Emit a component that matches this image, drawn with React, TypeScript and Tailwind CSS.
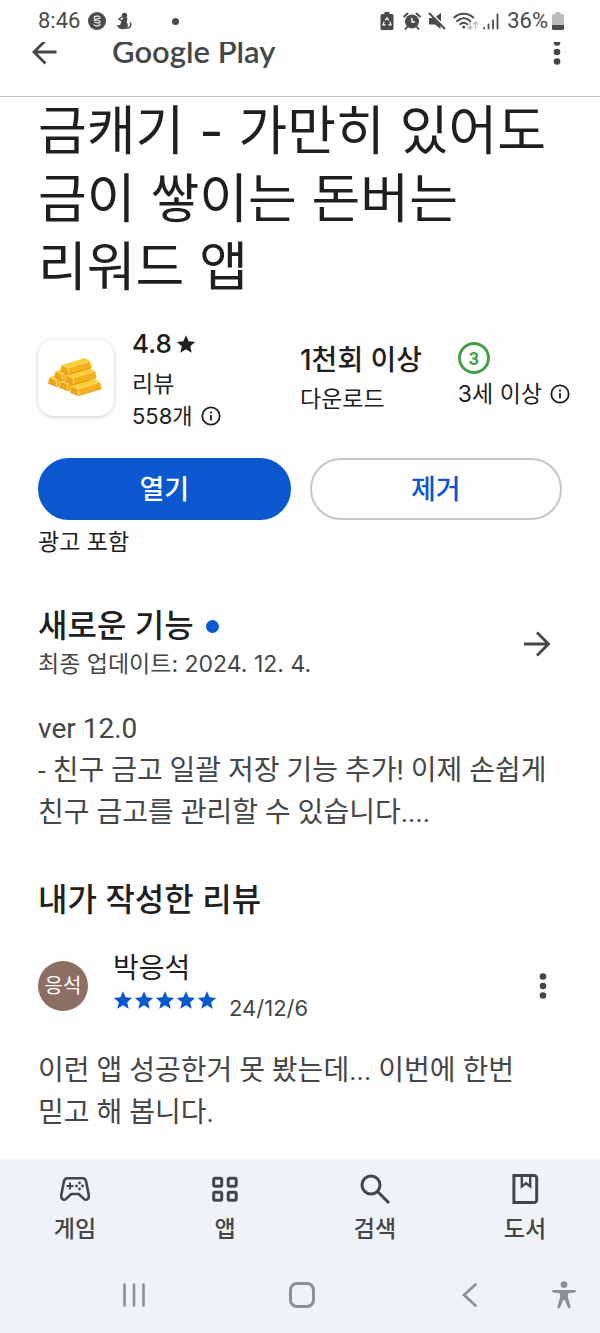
import type { ReactNode } from "react";

const STAR = "M12 1.5l3.1 7.3 7.9.7-6 5.2 1.8 7.8L12 18.4l-6.8 4.1L7 14.7 1 9.5l7.9-.7z";

function Star({ className }: { className: string }) {
  return (
    <svg viewBox="0 0 24 24" className={className} fill="currentColor" aria-hidden="true">
      <path d={STAR} />
    </svg>
  );
}

function InfoIcon() {
  return (
    <svg viewBox="0 0 20 20" className="size-5 shrink-0" fill="none" stroke="currentColor" strokeWidth="1.8" aria-hidden="true">
      <circle cx="10" cy="10" r="8.7" />
      <path d="M10 9v5.4M10 5.4v2" />
    </svg>
  );
}

function MoreIcon() {
  return (
    <svg viewBox="0 0 8 28" className="h-7 w-2" fill="currentColor" aria-hidden="true">
      <circle cx="4" cy="4.500" r="3.300" />
      <circle cx="4" cy="14" r="3.300" />
      <circle cx="4" cy="23.500" r="3.300" />
    </svg>
  );
}

function StatusBar() {
  return (
    <div className="flex h-[42px] items-center justify-between pr-9 pl-[38px] text-[#4a4a4a]">
      <div className="flex items-center">
        <span className="font-[Roboto] text-[22px] leading-6">8:46</span>
        <svg viewBox="0 0 18 18" className="ml-2 size-[18px]" aria-hidden="true">
          <circle cx="9" cy="9" r="9" fill="currentColor" />
          <path d="M12 5.200C11 3.600 6.200 3.600 6.200 6.200c0 2.300 5.800 1.300 5.800 3.600 0 1.300-3.500 1.500-5.200.5M6 12.800c1 1.600 6 1.600 6-.8M9 6.500h3M6.200 8.500h2" fill="none" stroke="#f2f2f2" strokeWidth="1.200" strokeLinecap="round" />
        </svg>
        <svg viewBox="0 0 16 18" className="ml-[10px] h-[18px] w-4" aria-hidden="true">
          <circle cx="8.500" cy="3.400" r="2.700" fill="currentColor" />
          <path d="M7.500 5.500h3.500c1 1.500 0 3-.5 4.500 1.800 1.800 1.800 5-.5 6.500-3 1.600-8 .6-9.500-3.500 2 .6 3.300.3 4-.5C4.500 10.500 6 8 7.500 5.500z" fill="currentColor" />
          <path d="M9.500 15.800c4 .6 6-1.300 5-4.800M6.500 4.500L3 7l3 2" fill="none" stroke="currentColor" strokeWidth="1.500" strokeLinecap="round" />
        </svg>
        <span className="ml-10 size-[7px] rounded-full bg-current" />
      </div>
      <div className="flex items-center">
        <svg viewBox="0 0 14 18" className="h-[18px] w-[14px]" aria-hidden="true">
          <path d="M4.500 0h5v2H12a1.500 1.500 0 0 1 1.500 1.500v13A1.500 1.500 0 0 1 12 18H2A1.500 1.500 0 0 1 .5 16.500v-13A1.500 1.500 0 0 1 2 2h2.500z" fill="currentColor" />
          <path d="M5.300 8.300L7 5.800l1.700 2.500M9.800 9.800l1.200 3H8.300M5.700 12.800H3l1.200-3" fill="none" stroke="#fff" strokeWidth="1.200" />
        </svg>
        <svg viewBox="0 0 18 18" className="ml-[9px] size-[18px]" aria-hidden="true">
          <circle cx="9" cy="9.500" r="7" fill="currentColor" />
          <path d="M1.200 4.500L4.500 1.500M16.800 4.500l-3.300-3M4.500 14.500l-2 2.500M13.500 14.500l2 2.500" stroke="currentColor" strokeWidth="1.900" strokeLinecap="round" />
          <path d="M9 5.800v4.200h3" fill="none" stroke="#fff" strokeWidth="1.400" />
        </svg>
        <svg viewBox="0 0 18 18" className="ml-[7px] size-[18px]" aria-hidden="true">
          <path d="M1 6h4l7.500 7.500V17L7 12.500H1zM13 .8v8.700L8 4.800z" fill="currentColor" />
          <path d="M1.500 1.500l15 15" stroke="currentColor" strokeWidth="1.900" strokeLinecap="round" />
        </svg>
        <svg viewBox="0 0 26 20" className="ml-[7px] h-5 w-[26px]" aria-hidden="true">
          <g fill="none" stroke="currentColor" strokeWidth="2" strokeLinecap="round">
            <path d="M1.200 6.500c5.500-5 13.500-5 19 0M4.200 10c4-3.700 9-3.700 13 0M7.200 13.200c2.300-2 4.700-2 7 0" />
          </g>
          <circle cx="10.700" cy="16" r="1.600" fill="currentColor" />
          <path d="M17 11v7M14.500 15.500L17 18l2.500-2.500M22.500 18v-7M20 13.500l2.500-2.500 2.500 2.500" fill="none" stroke="#bbb" strokeWidth="1.300" />
        </svg>
        <svg viewBox="0 0 16 18" className="ml-1 h-[18px] w-4" fill="none" stroke="currentColor" strokeWidth="1.800" strokeLinecap="round" aria-hidden="true">
          <path d="M1.200 16.500v-.5M5.500 16.500v-4M10 16.500v-8M14.500 16.500v-14" />
        </svg>
        <span className="ml-2 font-[Roboto] text-[22px] leading-6">36%</span>
        <svg viewBox="0 0 12 18" className="ml-1 h-[18px] w-3" aria-hidden="true">
          <path d="M3.500 0h5v2H10.500A1.500 1.500 0 0 1 12 3.500V13H0V3.500A1.500 1.500 0 0 1 1.500 2h2z" fill="#bcbcbc" />
          <path d="M0 13h12v3.500a1.500 1.500 0 0 1-1.500 1.500h-9A1.500 1.500 0 0 1 0 16.500z" fill="currentColor" />
        </svg>
      </div>
    </div>
  );
}

function AppHeader() {
  return (
    <header className="flex h-[55px] items-start overflow-hidden border-b border-[#c4c4c4] pr-[39px] pl-8 text-[#444746]">
      <button type="button" aria-label="뒤로" className="-mt-1 flex h-7 w-[26px] items-center">
        <svg viewBox="0 0 26 28" className="h-7 w-[26px]" fill="none" stroke="currentColor" strokeWidth="2.800" aria-hidden="true">
          <path d="M24.500 14H2.500M13.500 2.500L2 14l11.500 11.500" />
        </svg>
      </button>
      <span className="-mt-[9px] ml-[54px] flex-1 font-[Lato] text-[31px] leading-9 font-semibold">Google Play</span>
      <button type="button" aria-label="옵션 더보기" className="-mt-1 flex">
        <MoreIcon />
      </button>
    </header>
  );
}

function Bar({ x, y }: { x: number; y: number }) {
  return (
    <g transform={`translate(${x} ${y})`}>
      <path d="M1.500 0L24.500-7l5.500 3L8 3z" fill="#ffcf38" />
      <path d="M8 3l22-7 1.500 6.500L8.500 9.500z" fill="#f5b01a" />
      <path d="M0 6L1.500 0 8 3l.5 6.500z" fill="#f0a416" />
      <path d="M0 6L1.500 0 8 3l.5 6.500M8 3l22-7" fill="none" stroke="#ffe88a" strokeWidth=".7" />
      <path d="M0 6.200l8.500 3.500 23-7" fill="none" stroke="#d98e0c" strokeWidth=".8" />
    </g>
  );
}

function GoldIcon() {
  return (
    <div className="flex size-[76px] shrink-0 items-center justify-center rounded-2xl bg-white shadow-[0_1px_4px_rgba(0,0,0,0.2)]">
      <svg viewBox="0 0 56 40" className="h-10 w-14" role="img" aria-label="금캐기">
        <Bar x={0} y={19} />
        <Bar x={11} y={23} />
        <Bar x={22} y={28} />
        <Bar x={6} y={13} />
        <Bar x={17} y={17} />
        <Bar x={12} y={7} />
      </svg>
    </div>
  );
}

function Stats() {
  return (
    <section className="mt-[27px] flex items-start text-[#1f1f1f]">
      <div className="mt-3">
        <GoldIcon />
      </div>
      <div className="ml-[18px] w-[168px]">
        <div className="flex h-8 items-center gap-1 text-[26px] leading-8 font-medium">
          <span>4.8</span>
          <Star className="size-5" />
        </div>
        <div className="mt-2 text-[23px] leading-8">리뷰</div>
        <div className="flex h-8 items-center gap-2 text-[22px] leading-8">
          <span>558개</span>
          <InfoIcon />
        </div>
      </div>
      <div className="mt-[14px] flex-1 whitespace-nowrap">
        <div className="text-[28px] leading-9 font-medium">1천회 이상</div>
        <div className="mt-[3px] text-[23px] leading-9">다운로드</div>
      </div>
      <div className="-mr-2 mt-[14px] whitespace-nowrap">
        <div className="flex size-8 items-center justify-center rounded-full border-[3px] border-[#43a047] font-[Roboto] text-[18px] font-bold text-[#43a047]">
          3
        </div>
        <div className="mt-1 flex h-8 items-center gap-2 text-[23px] leading-8">
          <span>3세 이상</span>
          <InfoIcon />
        </div>
      </div>
    </section>
  );
}

function NavItem({ label, children }: { label: string; children: ReactNode }) {
  return (
    <a href="#" className="flex flex-1 flex-col items-center gap-2">
      <svg viewBox="0 0 32 32" className="size-8" fill="none" stroke="currentColor" strokeWidth="3" aria-hidden="true">
        {children}
      </svg>
      <span className="text-[23px] leading-8 font-medium">{label}</span>
    </a>
  );
}

function BottomBars() {
  return (
    <footer className="mt-auto bg-[#eff3f8] pt-[14px] pb-5">
      <nav className="flex text-[#444746]">
        <NavItem label="게임">
          <path d="M8.500 5.200h15c1.900 0 3.100 1.100 3.500 2.900l2.800 14.200c.5 2.800-1.800 5.300-4.300 4.100L19.700 21h-7.400l-5.800 5.400c-2.500 1.200-4.800-1.300-4.300-4.100L5 8.100c.4-1.800 1.600-2.900 3.500-2.900z" strokeWidth="2.600" strokeLinejoin="round" />
          <path d="M7.500 13h7M11 9.500v7" strokeWidth="2" />
          <g fill="currentColor" stroke="none">
            <circle cx="20.500" cy="10" r="1.400" />
            <circle cx="20.500" cy="16" r="1.400" />
            <circle cx="17.500" cy="13" r="1.400" />
            <circle cx="23.500" cy="13" r="1.400" />
          </g>
        </NavItem>
        <NavItem label="앱">
          <rect x="4.700" y="5.200" width="8" height="8" rx="1.500" />
          <rect x="19.200" y="5.200" width="8" height="8" rx="1.500" />
          <rect x="4.700" y="19.200" width="8" height="8" rx="1.500" />
          <rect x="19.200" y="19.200" width="8" height="8" rx="1.500" />
        </NavItem>
        <NavItem label="검색">
          <circle cx="12" cy="12" r="9" />
          <path d="M18.500 18.500L30 30" />
        </NavItem>
        <NavItem label="도서">
          <path d="M4.900 2.400H25a2.700 2.700 0 0 1 2.700 2.700v21.800a2.700 2.700 0 0 1-2.700 2.700H4.900z" />
          <path d="M12.800 3v10.400l4.200-3.200 4.200 3.200V3" strokeWidth="2.400" />
        </NavItem>
      </nav>
      <nav className="mt-8 flex h-9 items-center text-[#8c8f93]">
        <div className="flex flex-1 items-center justify-between pr-[30px] pl-[122px]">
          <button type="button" aria-label="최근 앱">
            <svg viewBox="0 0 24 26" className="h-[26px] w-6" stroke="currentColor" strokeWidth="2.600" strokeLinecap="round" aria-hidden="true">
              <path d="M2.500 2.500v21M12 2.500v21M21.500 2.500v21" />
            </svg>
          </button>
          <button type="button" aria-label="홈" className="h-[26px] w-[26px] rounded-lg border-[3px] border-current" />
          <button type="button" aria-label="이전">
            <svg viewBox="0 0 24 26" className="h-[26px] w-6" fill="none" stroke="currentColor" strokeWidth="2.600" strokeLinecap="round" aria-hidden="true">
              <path d="M17.500 2.500L6 13l11.500 10.500" />
            </svg>
          </button>
        </div>
        <button type="button" aria-label="접근성" className="mr-6 ml-10">
          <svg viewBox="0 0 24 28" className="h-7 w-6" fill="currentColor" aria-hidden="true">
            <circle cx="12" cy="3.600" r="3.400" />
            <path d="M1.500 9h21a1.300 1.300 0 0 1 0 2.600L16 12.500v4l2.600 9.300a1.300 1.300 0 0 1-2.600.8L12.600 19h-1.200L8 26.600a1.300 1.300 0 0 1-2.600-.8L8 16.500v-4l-6.500-.9a1.300 1.300 0 0 1 0-2.600z" />
          </svg>
        </button>
      </nav>
    </footer>
  );
}

export default function App() {
  return (
    <div className="flex min-h-screen flex-col bg-[#fefefe] font-[Inter,'Noto_Sans_CJK_KR',sans-serif] break-keep text-[#444746]">
      <StatusBar />
      <AppHeader />
      <main className="px-[38px] pb-6">
        <h1 className="text-[53px] leading-[68px] text-[#1f1f1f]">금캐기 - 가만히 있어도 금이 쌓이는 돈버는 리워드 앱</h1>
        <Stats />
        <div className="mt-[26px] grid grid-cols-2 gap-[19px] text-[27px] font-medium">
          <button type="button" className="h-[62px] rounded-full border-2 border-[#0b57d0] bg-[#0b57d0] pt-[2px] text-white">열기</button>
          <button type="button" className="h-[62px] rounded-full border-2 border-[#c7c7c7] pt-[2px] text-[#0b57d0]">제거</button>
        </div>
        <p className="mt-1 text-[23px] leading-9 text-[#1f1f1f]">광고 포함</p>

        <section className="mt-[46px]">
          <div className="flex items-center justify-between">
            <div>
              <h2 className="flex items-center gap-3 text-[32px] leading-10 font-medium text-[#1f1f1f]">
                새로운 기능
                <span className="size-[13px] rounded-full bg-[#0b57d0]" />
              </h2>
              <p className="text-[23px] leading-9">최종 업데이트: 2024. 12. 4.</p>
            </div>
            <button type="button" aria-label="새로운 기능 더보기" className="mr-3">
              <svg viewBox="0 0 26 26" className="size-[26px]" fill="none" stroke="currentColor" strokeWidth="2.800" aria-hidden="true">
                <path d="M0 13h24M13 1.500L24.500 13 13 24.500" />
              </svg>
            </button>
          </div>
          <p className="mt-[26px] font-[Roboto,'Noto_Sans_CJK_KR',sans-serif] text-[28px] leading-[42px]">
            ver 12.0
            <br />- 친구 금고 일괄 저장 기능 추가! 이제 손쉽게 친구 금고를 관리할 수 있습니다....
          </p>
        </section>

        <section className="mt-[46px]">
          <h2 className="text-[32px] leading-10 font-medium text-[#1f1f1f]">내가 작성한 리뷰</h2>
          <div className="mt-[30px] flex items-center">
            <div className="flex size-[50px] items-center justify-center rounded-full bg-[#8d6e63] text-[20px] text-white">응석</div>
            <div className="ml-[25px] flex-1">
              <div className="text-[28px] leading-9 text-[#1f1f1f]">박응석</div>
              <div className="flex h-9 items-start">
                <div className="mt-1 flex gap-px text-[#0b57d0]" role="img" aria-label="별점 5점">
                  {[0, 1, 2, 3, 4].map((i) => (
                    <Star key={i} className="size-5" />
                  ))}
                </div>
                <span className="mt-1 ml-3 text-[22px] leading-9">24/12/6</span>
              </div>
            </div>
            <button type="button" aria-label="리뷰 옵션" className="mr-[15px]">
              <MoreIcon />
            </button>
          </div>
          <p className="mt-7 font-[Roboto,'Noto_Sans_CJK_KR',sans-serif] text-[28px] leading-[42px]">이런 앱 성공한거 못 봤는데... 이번에 한번 믿고 해 봅니다.</p>
        </section>
      </main>
      <BottomBars />
    </div>
  );
}
